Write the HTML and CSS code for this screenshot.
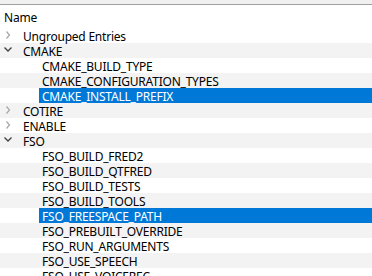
FILE: index.html
```html
<!DOCTYPE html>
<html>
<head>
<meta charset="utf-8">
<link rel="stylesheet" href="styles.css">
</head>
<body>
<div class="topstrip"></div>
<div class="header">Name</div>
<div class="tree">
  <div class="row"><span class="ind0"><svg width="20" height="15"><polyline points="6.5,3.5 9.5,7 6.5,10.5" class="col"/></svg></span><span class="label">Ungrouped Entries</span></div>
  <div class="row alt"><span class="ind0"><svg width="20" height="15"><polyline points="4.5,4.5 8,8 11.5,4.5" class="exp"/></svg></span><span class="label">CMAKE</span></div>
  <div class="row"><span class="ind1"></span><span class="label">CMAKE_BUILD_TYPE</span></div>
  <div class="row alt"><span class="ind1"></span><span class="label">CMAKE_CONFIGURATION_TYPES</span></div>
  <div class="row"><span class="ind1"></span><span class="label sel">CMAKE_INSTALL_PREFIX</span></div>
  <div class="row alt"><span class="ind0"><svg width="20" height="15"><polyline points="6.5,3.5 9.5,7 6.5,10.5" class="col"/></svg></span><span class="label">COTIRE</span></div>
  <div class="row"><span class="ind0"><svg width="20" height="15"><polyline points="6.5,3.5 9.5,7 6.5,10.5" class="col"/></svg></span><span class="label">ENABLE</span></div>
  <div class="row alt"><span class="ind0"><svg width="20" height="15"><polyline points="4.5,4.5 8,8 11.5,4.5" class="exp"/></svg></span><span class="label">FSO</span></div>
  <div class="row"><span class="ind1"></span><span class="label">FSO_BUILD_FRED2</span></div>
  <div class="row alt"><span class="ind1"></span><span class="label">FSO_BUILD_QTFRED</span></div>
  <div class="row"><span class="ind1"></span><span class="label">FSO_BUILD_TESTS</span></div>
  <div class="row alt"><span class="ind1"></span><span class="label">FSO_BUILD_TOOLS</span></div>
  <div class="row"><span class="ind1"></span><span class="label sel">FSO_FREESPACE_PATH</span></div>
  <div class="row alt"><span class="ind1"></span><span class="label">FSO_PREBUILT_OVERRIDE</span></div>
  <div class="row"><span class="ind1"></span><span class="label">FSO_RUN_ARGUMENTS</span></div>
  <div class="row alt"><span class="ind1"></span><span class="label">FSO_USE_SPEECH</span></div>
  <div class="row"><span class="ind1"></span><span class="label">FSO_USE_VOICEREC</span></div>
</div>
</body>
</html>
```
FILE: styles.css
```css
html, body {
  margin: 0;
  padding: 0;
  background: #ffffff;
  overflow: hidden;
}
body {
  font-family: "Noto Sans", "Open Sans", "Liberation Sans", sans-serif;
  font-size: 12px;
  letter-spacing: -0.22px;
  color: #000000;
}
.topstrip {
  height: 4px;
  background: #f0f0f0;
  border-bottom: 1px solid #a0a0a0;
}
.header {
  box-sizing: border-box;
  height: 23px;
  line-height: 23px;
  padding-top: 1px;
  padding-left: 4px;
  background: #ffffff;
}
.tree {
  display: block;
}
.row {
  display: flex;
  height: 15px;
  background: #ffffff;
  white-space: nowrap;
}
.row.alt {
  background: #f3f3f3;
}
.ind0 {
  width: 20px;
  flex: none;
  display: flex;
}
.ind1 {
  width: 39px;
  flex: none;
}
.label {
  flex: 1;
  box-sizing: border-box;
  height: 15px;
  line-height: 15px;
  padding-top: 1px;
  padding-left: 3px;
}
.label.sel {
  background: #0078d7;
  color: #ffffff;
}
.col {
  fill: none;
  stroke: #a6a6a6;
  stroke-width: 1.2;
}
.exp {
  fill: none;
  stroke: #404040;
  stroke-width: 1.3;
}
```
